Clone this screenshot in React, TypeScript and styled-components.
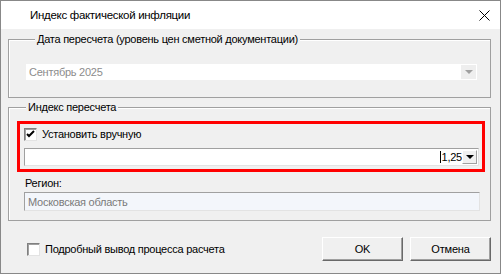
import styled, { createGlobalStyle } from 'styled-components';

const GlobalStyle = createGlobalStyle`
  html, body {
    margin: 0;
    padding: 0;
    background: #ffffff;
  }
  body {
    font-family: 'Liberation Sans', Arial, sans-serif;
    font-size: 11px;
    letter-spacing: -0.25px;
    color: #000000;
  }
`;

const Window = styled.div`
  box-sizing: border-box;
  width: 501px;
  height: 274px;
  border: 1px solid #888888;
  display: flex;
  flex-direction: column;
  background: #f0f0f0;
`;

const TitleBar = styled.div`
  height: 28px;
  flex: none;
  background: #ffffff;
  display: flex;
  align-items: center;
  justify-content: space-between;
  padding: 0 10px 0 29px;
`;

const Title = styled.span`
  font-size: 11.5px;
  letter-spacing: -0.3px;
`;

const Body = styled.div`
  flex: 1;
  display: flex;
  flex-direction: column;
  padding: 3px 9px 0 7px;
`;

const Group = styled.fieldset<{ $pad: string }>`
  margin: 0;
  padding: ${p => p.$pad};
  border: 1px solid #a0a0a0;
  box-shadow: inset 1px 1px 0 #ffffff;
  display: flex;
  flex-direction: column;
  & + & {
    margin-top: 2px;
  }
`;

const Legend = styled.legend`
  margin-left: 9px;
  padding: 0 2px;
  line-height: 14px;
  background: #f0f0f0;
`;

const Combo = styled.div<{ $disabled?: boolean }>`
  box-sizing: border-box;
  height: ${p => (p.$disabled ? '16px' : '18px')};
  display: flex;
  align-items: center;
  background: #ffffff;
  border: ${p => (p.$disabled ? 'none' : '1px solid')};
  border-color: #a0a0a0 #e3e3e3 #e3e3e3 #a0a0a0;
  padding: 1px;
  color: ${p => (p.$disabled ? '#8c8c8c' : '#000000')};
`;

const ComboText = styled.span<{ $right?: boolean }>`
  flex: 1;
  padding-left: 2px;
  display: flex;
  justify-content: ${p => (p.$right ? 'flex-end' : 'flex-start')};
  align-items: center;
`;

const Caret = styled.span`
  width: 1px;
  height: 12px;
  background: #000000;
  margin-right: 1px;
`;

const DropButton = styled.div<{ $disabled?: boolean }>`
  box-sizing: border-box;
  width: 15px;
  height: 14px;
  display: flex;
  align-items: center;
  justify-content: center;
  background: ${p => (p.$disabled ? '#eeeeee' : '#f0f0f0')};
  border: ${p => (p.$disabled ? 'none' : '1px solid')};
  border-color: #ffffff #a0a0a0 #a0a0a0 #ffffff;
`;

const Arrow = styled.span<{ $disabled?: boolean }>`
  width: 0;
  height: 0;
  border-left: 4px solid transparent;
  border-right: 4px solid transparent;
  border-top: 4px solid ${p => (p.$disabled ? '#a0a0a0' : '#000000')};
`;

const Highlight = styled.div`
  border: 3px solid #ff0000;
  padding: 3px 3px 3px 4px;
  display: flex;
  flex-direction: column;
  gap: 7px;
`;

const CheckRow = styled.label`
  display: flex;
  align-items: center;
  gap: 5px;
  height: 14px;
`;

const Box = styled.span`
  box-sizing: border-box;
  width: 13px;
  height: 13px;
  background: #ffffff;
  border: 1px solid;
  border-color: #808080 #e3e3e3 #e3e3e3 #808080;
  box-shadow: inset 1px 1px 0 #a0a0a0;
  display: flex;
  align-items: center;
  justify-content: center;
`;

const Label = styled.div`
  margin: 5px 0 3px 8px;
`;

const ReadonlyField = styled.div`
  box-sizing: border-box;
  height: 19px;
  margin-left: 7px;
  margin-right: 5px;
  display: flex;
  align-items: center;
  padding-left: 3px;
  background: #f3f6fb;
  border: 1px solid;
  border-color: #a0a0a0 #e3e3e3 #e3e3e3 #a0a0a0;
  color: #7a7a7a;
`;

const Footer = styled.div`
  display: flex;
  align-items: center;
  justify-content: space-between;
  padding: 16px 0 0 19px;
`;

const Buttons = styled.div`
  display: flex;
  gap: 7px;
`;

const Button = styled.button`
  box-sizing: border-box;
  width: 81px;
  height: 24px;
  font-family: 'Liberation Sans', Arial, sans-serif;
  font-size: 11px;
  letter-spacing: -0.2px;
  color: #000000;
  background: #f0f0f0;
  border: 1px solid;
  border-color: #ffffff #696969 #696969 #ffffff;
  box-shadow: inset -1px -1px 0 #a0a0a0;
  padding: 0;
`;

const Check = () => (
  <svg width="9" height="9" viewBox="0 0 9 9">
    <path d="M1 4 L3 6 L8 1" fill="none" stroke="#000" strokeWidth="2" />
  </svg>
);

const CloseIcon = () => (
  <svg width="11" height="11" viewBox="0 0 11 11">
    <path d="M0.5 0.5 L10.5 10.5 M10.5 0.5 L0.5 10.5" stroke="#000" strokeWidth="1" />
  </svg>
);

const App = () => {
  return (
    <>
      <GlobalStyle />
      <Window>
        <TitleBar>
          <Title>Индекс фактической инфляции</Title>
          <CloseIcon />
        </TitleBar>
        <Body>
          <Group $pad="18px 13px 17px 17px">
            <Legend>Дата пересчета (уровень цен сметной документации)</Legend>
            <Combo $disabled>
              <ComboText>Сентябрь 2025</ComboText>
              <DropButton $disabled>
                <Arrow $disabled />
              </DropButton>
            </Combo>
          </Group>
          <Group $pad="7px 5px 9px 8px">
            <Legend>Индекс пересчета</Legend>
            <Highlight>
              <CheckRow>
                <Box>
                  <Check />
                </Box>
                Установить вручную
              </CheckRow>
              <Combo>
                <ComboText $right>
                  <Caret />
                  1,25
                </ComboText>
                <DropButton>
                  <Arrow />
                </DropButton>
              </Combo>
            </Highlight>
            <Label>Регион:</Label>
            <ReadonlyField>Московская область</ReadonlyField>
          </Group>
          <Footer>
            <CheckRow>
              <Box />
              Подробный вывод процесса расчета
            </CheckRow>
            <Buttons>
              <Button>OK</Button>
              <Button>Отмена</Button>
            </Buttons>
          </Footer>
        </Body>
      </Window>
    </>
  );
};

export default App;
